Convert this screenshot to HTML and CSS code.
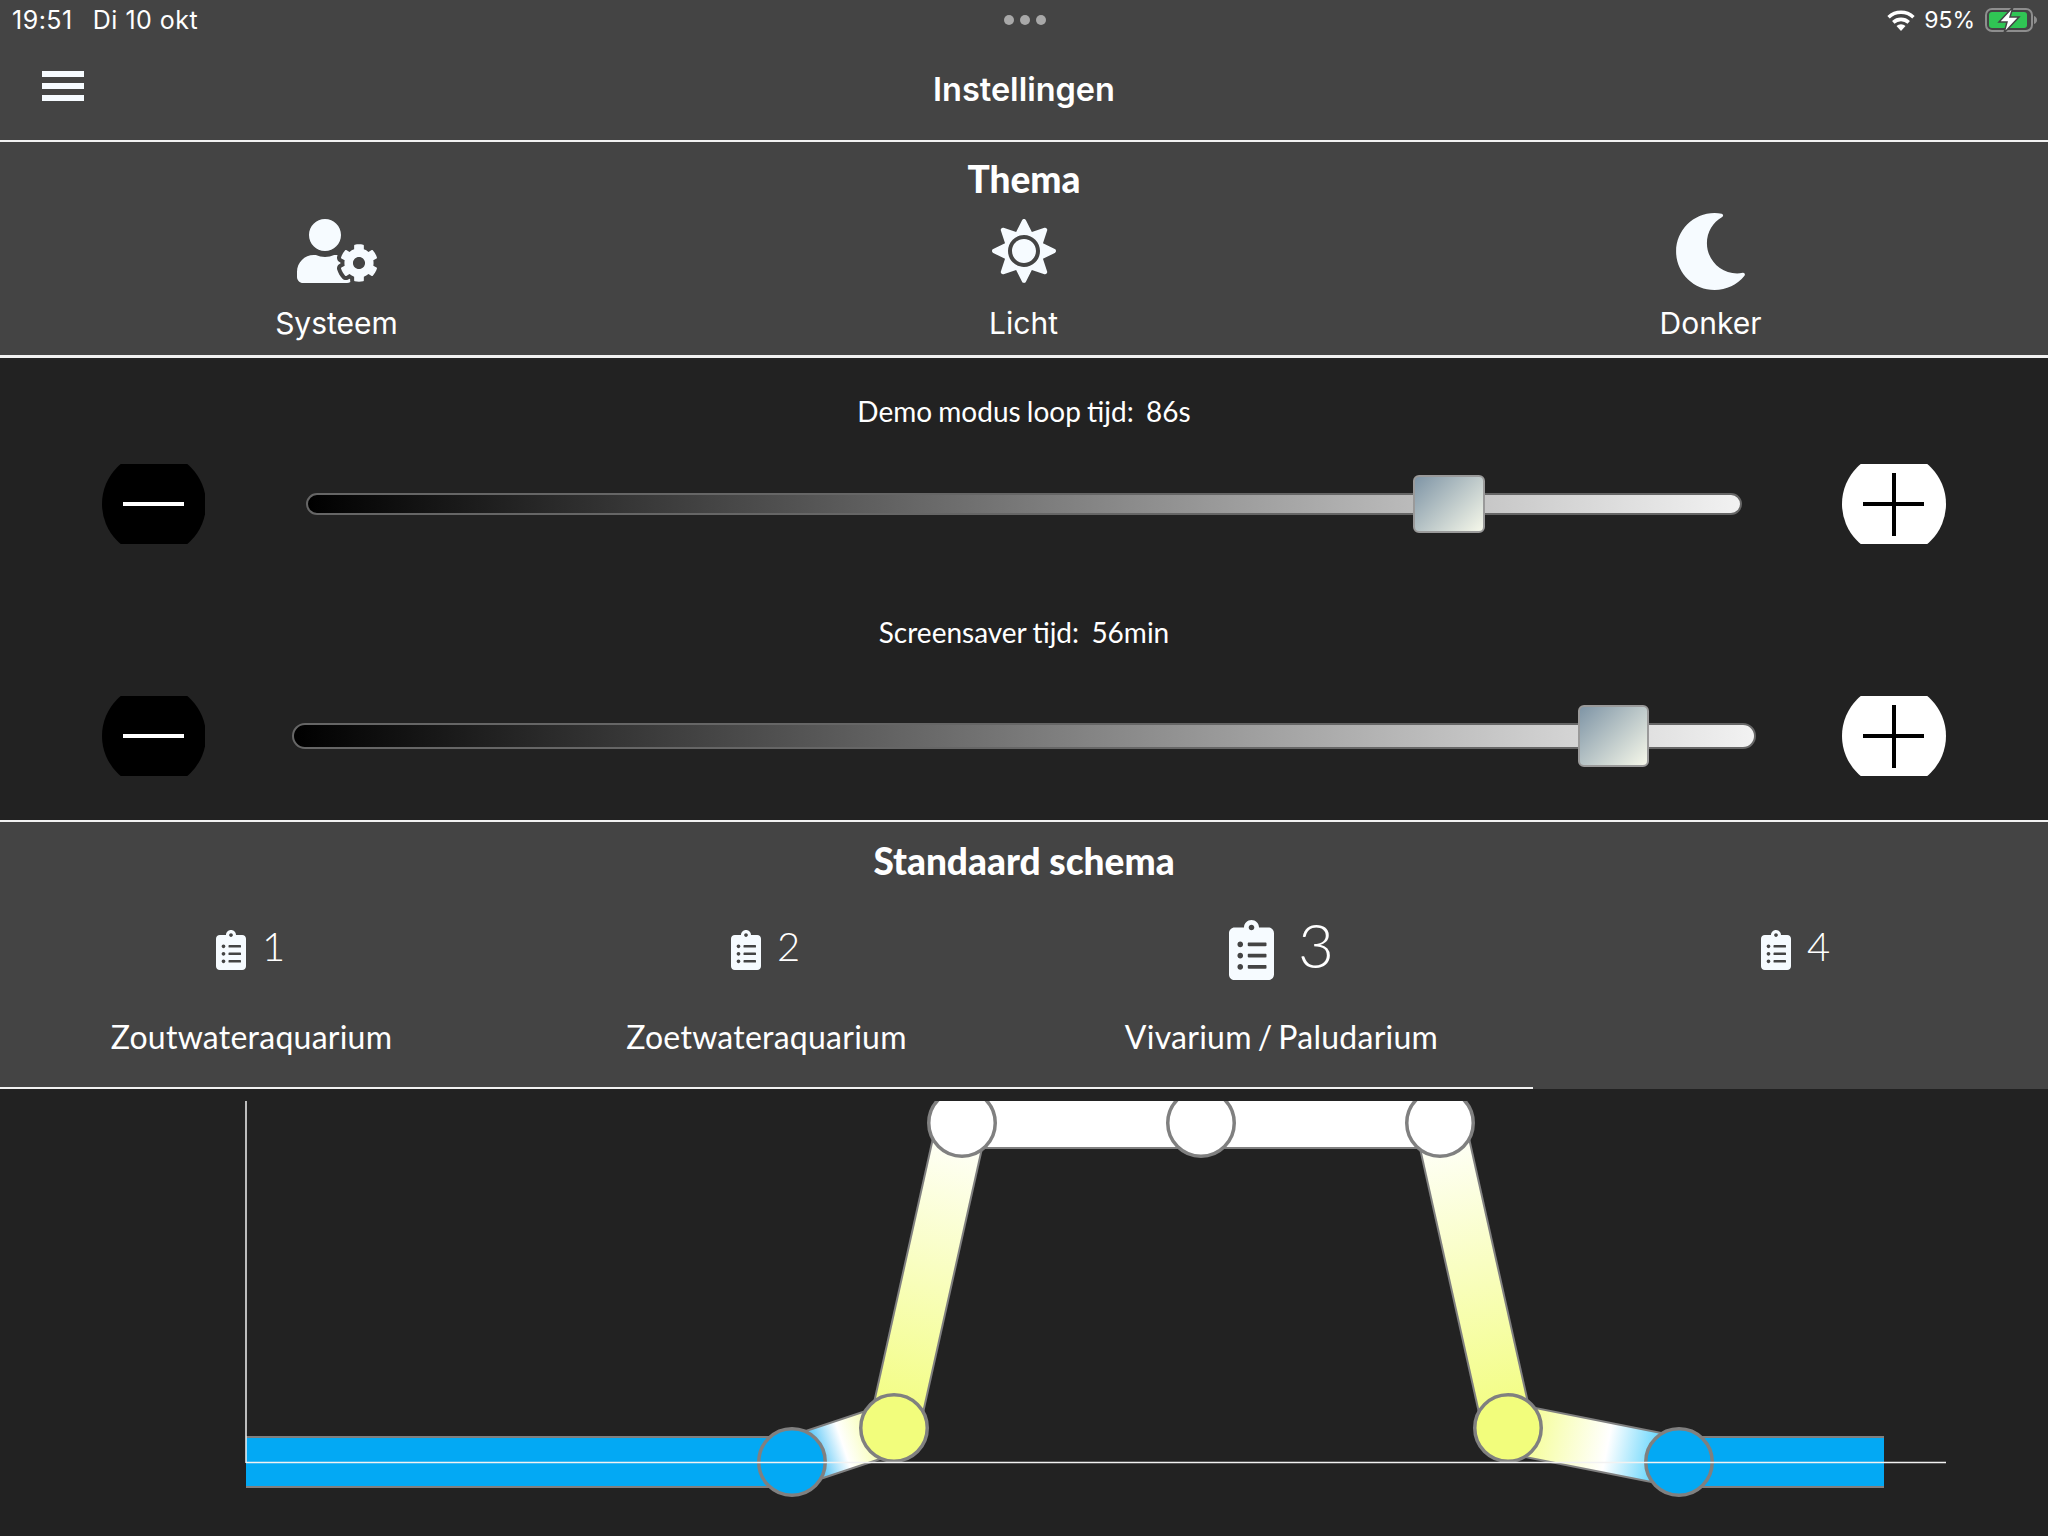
FILE: index.html
```html
<!DOCTYPE html>
<html lang="nl">
<head>
    <meta charset="UTF-8">
    <title>Instellingen</title>
    <link rel="stylesheet" href="styles.css">
</head>
<body>
<div class="top">
    <div class="status">
        <div class="status-left">
            <span>19:51</span>
            <span>Di 10 okt</span>
        </div>
        <div class="dots"><i></i><i></i><i></i></div>
        <div class="status-right">
            <svg class="wifi" viewBox="0 0 28 20">
                <path d="M14 20l-4.300-4.800a6.300 6.300 0 0 1 8.600 0z"/>
                <path d="M7.800 13a9.200 9.200 0 0 1 12.400 0l2.300-2.500a12.600 12.600 0 0 0-17 0z"/>
                <path d="M3.300 8.100a15.800 15.800 0 0 1 21.400 0l2.300-2.500a19.200 19.200 0 0 0-26 0z"/>
            </svg>
            <span>95%</span>
            <svg class="battery" viewBox="0 0 52 26">
                <rect x="1" y="2" width="46" height="22" rx="6" fill="none" stroke="#8e8e8e" stroke-width="2"/>
                <rect x="4" y="5" width="38" height="16" rx="3" fill="#30c554"/>
                <path d="M49 9c1.700.4 3 2 3 4s-1.300 3.600-3 4z" fill="#8e8e8e"/>
                <path d="M28 0L14 15h8l-3 11 15-16h-9z" fill="#fff" stroke="#444" stroke-width="1.500"/>
            </svg>
        </div>
    </div>
    <div class="titlebar">
        <div class="burger"><i></i><i></i><i></i></div>
        <h1>Instellingen</h1>
    </div>
</div>

<section class="theme">
    <h2>Thema</h2>
    <div class="theme-row">
        <div class="theme-item">
            <div class="theme-icon">
                <svg class="icon-user" viewBox="0 0 640 512"><path d="M610.500 373.300c2.600-14.100 2.600-28.500 0-42.600l25.800-14.900c3-1.700 4.300-5.200 3.300-8.500-6.700-21.600-18.200-41.200-33.200-57.400-2.300-2.500-6-3.100-9-1.400l-25.800 14.900c-10.900-9.300-23.400-16.500-36.900-21.300v-29.800c0-3.400-2.400-6.400-5.700-7.100-22.300-5-45-4.800-66.200 0-3.300.7-5.700 3.700-5.700 7.100v29.800c-13.500 4.800-26 12-36.900 21.300l-25.800-14.900c-2.900-1.700-6.700-1.100-9 1.400-15 16.200-26.500 35.800-33.200 57.400-1 3.300.4 6.800 3.300 8.500l25.800 14.900c-2.600 14.100-2.600 28.500 0 42.600l-25.800 14.900c-3 1.700-4.300 5.200-3.300 8.500 6.700 21.600 18.200 41.100 33.200 57.400 2.300 2.500 6 3.100 9 1.400l25.800-14.900c10.900 9.300 23.400 16.500 36.900 21.300v29.800c0 3.400 2.400 6.400 5.700 7.100 22.300 5 45 4.800 66.200 0 3.300-.7 5.700-3.700 5.700-7.100v-29.800c13.500-4.800 26-12 36.900-21.300l25.800 14.900c2.900 1.700 6.700 1.100 9-1.400 15-16.200 26.500-35.800 33.200-57.400 1-3.300-.4-6.800-3.300-8.500l-25.800-14.900zM496 400.500c-26.800 0-48.500-21.800-48.500-48.500s21.800-48.500 48.500-48.500 48.500 21.800 48.500 48.500-21.700 48.500-48.500 48.500zM224 256c70.700 0 128-57.300 128-128S294.700 0 224 0 96 57.300 96 128s57.300 128 128 128zm201.200 226.500c-2.300-1.200-4.600-2.600-6.800-3.900l-7.900 4.600c-6 3.400-12.800 5.300-19.600 5.300-10.900 0-21.400-4.600-28.900-12.600-18.300-19.800-32.300-43.900-40.200-69.600-5.500-17.700 1.900-36.400 17.900-45.700l7.900-4.600c-.1-2.600-.1-5.200 0-7.800l-7.900-4.600c-16-9.200-23.400-28-17.900-45.700.9-2.900 2.200-5.800 3.200-8.700-3.800-.3-7.500-1.200-11.400-1.200h-16.700c-22.200 10.200-46.900 16-72.900 16s-50.600-5.800-72.900-16h-16.700C60.200 288 0 348.200 0 422.400V464c0 26.500 21.500 48 48 48h352c10.100 0 19.500-3.200 27.200-8.500-1.200-3.800-2-7.700-2-11.800v-9.200z"/></svg>
            </div>
            <span>Systeem</span>
        </div>
        <div class="theme-item">
            <div class="theme-icon">
                <svg class="icon-sun" viewBox="0 0 512 512"><path d="M256 160c-52.900 0-96 43.100-96 96s43.100 96 96 96 96-43.100 96-96-43.100-96-96-96zm246.400 80.500l-94.700-47.300 33.500-100.400c4.500-13.600-8.400-26.500-21.900-21.900l-100.400 33.500-47.400-94.800c-6.400-12.800-24.600-12.800-31 0l-47.300 94.700L92.700 70.800c-13.600-4.500-26.500 8.400-21.900 21.900l33.500 100.400-94.700 47.400c-12.800 6.400-12.800 24.600 0 31l94.700 47.300-33.500 100.500c-4.500 13.600 8.400 26.500 21.900 21.900l100.400-33.500 47.300 94.700c6.400 12.800 24.600 12.800 31 0l47.300-94.700 100.400 33.500c13.600 4.500 26.500-8.400 21.900-21.900l-33.500-100.400 94.700-47.300c13-6.500 13-24.700.2-31.100zm-155.900 106c-49.900 49.900-131.100 49.900-181 0-49.900-49.900-49.900-131.100 0-181 49.900-49.900 131.100-49.900 181 0 49.900 49.900 49.900 131.100 0 181z"/></svg>
            </div>
            <span>Licht</span>
        </div>
        <div class="theme-item">
            <div class="theme-icon">
                <svg class="icon-moon" viewBox="0 0 512 512"><path d="M283.211 512c78.962 0 151.079-35.925 198.857-94.792 7.068-8.708-.639-21.430-11.562-19.350-124.203 23.654-238.262-71.576-238.262-196.954 0-72.222 38.662-138.635 101.498-174.394 9.686-5.512 7.250-20.197-3.756-22.230A258.156 258.156 0 0 0 283.211 0c-141.309 0-256 114.511-256 256 0 141.309 114.511 256 256 256z"/></svg>
            </div>
            <span>Donker</span>
        </div>
    </div>
</section>

<section class="sliders">
    <p class="slider-label">Demo modus loop tijd:&nbsp; 86s</p>
    <div class="slider-row">
        <div class="round-btn minus"><b></b></div>
        <div class="track track-demo"><div class="thumb"></div></div>
        <div class="round-btn plus"><b></b><u></u></div>
    </div>
    <p class="slider-label slider-label-next">Screensaver tijd:&nbsp; 56min</p>
    <div class="slider-row slider-row-next">
        <div class="round-btn minus"><b></b></div>
        <div class="track track-saver"><div class="thumb"></div></div>
        <div class="round-btn plus"><b></b><u></u></div>
    </div>
</section>

<section class="schema">
    <h2>Standaard schema</h2>
    <div class="schema-row">
        <div class="schema-item">
            <div class="schema-num"><svg viewBox="0 0 384 512"><use href="#clip"/></svg><span>1</span></div>
            <p>Zoutwateraquarium</p>
        </div>
        <div class="schema-item">
            <div class="schema-num"><svg viewBox="0 0 384 512"><use href="#clip"/></svg><span>2</span></div>
            <p>Zoetwateraquarium</p>
        </div>
        <div class="schema-item active">
            <div class="schema-num"><svg viewBox="0 0 384 512"><use href="#clip"/></svg><span>3</span></div>
            <p>Vivarium / Paludarium</p>
        </div>
        <div class="schema-item">
            <div class="schema-num"><svg viewBox="0 0 384 512"><use href="#clip"/></svg><span>4</span></div>
            <p></p>
        </div>
    </div>
    <div class="schema-line"></div>
</section>

<div class="chart-wrap">
    <svg class="chart" width="1800" height="400" viewBox="200 1101 1800 400">
        <defs>
            <path id="clip" d="M336 64h-80c0-35.300-28.700-64-64-64s-64 28.700-64 64H48C21.500 64 0 85.500 0 112v352c0 26.500 21.500 48 48 48h288c26.500 0 48-21.500 48-48V112c0-26.500-21.500-48-48-48zM96 424c-13.300 0-24-10.700-24-24s10.700-24 24-24 24 10.700 24 24-10.700 24-24 24zm0-96c-13.300 0-24-10.700-24-24s10.700-24 24-24 24 10.700 24 24-10.700 24-24 24zm0-96c-13.300 0-24-10.700-24-24s10.700-24 24-24 24 10.700 24 24-10.700 24-24 24zm96-192c13.300 0 24 10.700 24 24s-10.700 24-24 24-24-10.700-24-24 10.700-24 24-24zm128 368c0 4.400-3.600 8-8 8H168c-4.400 0-8-3.600-8-8v-16c0-4.400 3.600-8 8-8h144c4.400 0 8 3.600 8 8v16zm0-96c0 4.400-3.600 8-8 8H168c-4.400 0-8-3.600-8-8v-16c0-4.400 3.600-8 8-8h144c4.400 0 8 3.600 8 8v16zm0-96c0 4.400-3.600 8-8 8H168c-4.400 0-8-3.600-8-8v-16c0-4.400 3.600-8 8-8h144c4.400 0 8 3.600 8 8v16z"/>
            <linearGradient id="g1" gradientUnits="userSpaceOnUse" x1="792" y1="1462" x2="894" y2="1428">
                <stop offset="0.1" stop-color="#03a9f4"/><stop offset="0.5" stop-color="#fff"/><stop offset="1" stop-color="#f2fd7c"/>
            </linearGradient>
            <linearGradient id="g2" gradientUnits="userSpaceOnUse" x1="894" y1="1428" x2="962" y2="1123">
                <stop offset="0" stop-color="#f2fd7c"/><stop offset="1" stop-color="#fff"/>
            </linearGradient>
            <linearGradient id="g3" gradientUnits="userSpaceOnUse" x1="1440" y1="1123" x2="1508" y2="1428">
                <stop offset="0" stop-color="#fff"/><stop offset="1" stop-color="#f2fd7c"/>
            </linearGradient>
            <linearGradient id="g4" gradientUnits="userSpaceOnUse" x1="1508" y1="1428" x2="1679" y2="1462">
                <stop offset="0" stop-color="#f2fd7c"/><stop offset="0.58" stop-color="#fff"/><stop offset="0.85" stop-color="#70d8fc"/><stop offset="1" stop-color="#03a9f4"/>
            </linearGradient>
        </defs>
        <g class="edge">
            <line x1="246" y1="1462" x2="792" y2="1462"/>
            <line x1="792" y1="1462" x2="894" y2="1428"/>
            <line x1="894" y1="1428" x2="962" y2="1123"/>
            <line x1="962" y1="1123" x2="1440" y2="1123"/>
            <line x1="1440" y1="1123" x2="1508" y2="1428"/>
            <line x1="1508" y1="1428" x2="1679" y2="1462"/>
            <line x1="1679" y1="1462" x2="1884" y2="1462"/>
        </g>
        <g class="fill">
            <line x1="246" y1="1462" x2="792" y2="1462" stroke="#03a9f4"/>
            <line x1="792" y1="1462" x2="894" y2="1428" stroke="url(#g1)"/>
            <line x1="894" y1="1428" x2="962" y2="1123" stroke="url(#g2)"/>
            <line x1="962" y1="1123" x2="1440" y2="1123" stroke="#fff"/>
            <line x1="1440" y1="1123" x2="1508" y2="1428" stroke="url(#g3)"/>
            <line x1="1508" y1="1428" x2="1679" y2="1462" stroke="url(#g4)"/>
            <line x1="1679" y1="1462" x2="1884" y2="1462" stroke="#03a9f4"/>
        </g>
        <g class="point">
            <circle cx="792" cy="1462" r="33.250" fill="#03a9f4"/>
            <circle cx="894" cy="1428" r="33.250" fill="#f2fd7c"/>
            <circle cx="962" cy="1123" r="33.250" fill="#fff"/>
            <circle cx="1201" cy="1123" r="33.250" fill="#fff"/>
            <circle cx="1440" cy="1123" r="33.250" fill="#fff"/>
            <circle cx="1508" cy="1428" r="33.250" fill="#f2fd7c"/>
            <circle cx="1679" cy="1462" r="33.250" fill="#03a9f4"/>
        </g>
        <g class="axis">
            <line x1="246" y1="1101" x2="246" y2="1463"/>
            <line x1="246" y1="1462.500" x2="1946" y2="1462.500"/>
        </g>
    </svg>
</div>
</body>
</html>
```

FILE: styles.css
```css
* {
    box-sizing: border-box;
    margin: 0;
    padding: 0;
}

body {
    width: 2048px;
    height: 1536px;
    overflow: hidden;
    background: #222;
    color: #fff;
    font-family: Inter, sans-serif;
}

svg {
    display: block;
    fill: #f6fbff;
}

/* top bar */
.top {
    height: 142px;
    background: #444;
    border-bottom: 2px solid #f2f2f2;
}

.status {
    height: 36px;
    padding: 4px 11px 0 12px;
    display: grid;
    grid-template-columns: 1fr auto 1fr;
    align-items: center;
    font-size: 23px;
}

.status-left {
    display: flex;
    gap: 20px;
    font-size: 25px;
    letter-spacing: 0.5px;
}

.dots {
    display: flex;
    gap: 6px;
}

.dots i {
    width: 10px;
    height: 10px;
    border-radius: 50%;
    background: #a8a8a8;
}

.status-right {
    display: flex;
    justify-content: flex-end;
    align-items: center;
    gap: 8px;
}

.wifi {
    width: 30px;
    height: 21px;
    fill: #fff;
}

.battery {
    width: 52px;
    height: 26px;
    margin-left: 2px;
}

.titlebar {
    position: relative;
    height: 104px;
    padding-top: 35px;
}

.titlebar h1 {
    text-align: center;
    font-size: 32.500px;
    font-weight: 600;
    line-height: 38px;
}

.burger {
    position: absolute;
    left: 42px;
    top: 35px;
    width: 42px;
}

.burger i {
    display: block;
    height: 6px;
    margin-bottom: 6px;
    background: #f6fbff;
}

/* theme */
.theme {
    height: 216px;
    background: #444;
    border-bottom: 3px solid #f2f2f2;
    padding-top: 15px;
}

h2 {
    text-align: center;
    font-family: Lato, sans-serif;
    font-weight: 900;
    font-size: 37px;
    line-height: 44px;
}

.theme-row {
    display: grid;
    grid-template-columns: repeat(3, 687px);
    margin-left: -7px;
    margin-top: 5px;
}

.theme-item {
    display: flex;
    flex-direction: column;
    align-items: center;
    font-size: 30px;
}

.theme-icon {
    height: 90px;
    margin-bottom: 9px;
    display: flex;
    align-items: center;
    justify-content: center;
}

.icon-user {
    width: 80px;
    height: 64px;
}

.icon-sun {
    width: 64px;
    height: 64px;
}

.icon-moon {
    width: 77px;
    height: 77px;
}

/* sliders */
.sliders {
    height: 464px;
    padding-top: 33px;
    border-bottom: 2px solid #f2f2f2;
}

.slider-label {
    height: 40px;
    line-height: 40px;
    text-align: center;
    font-family: Lato, sans-serif;
    font-size: 28px;
    word-spacing: -1px;
}

.slider-label-next {
    margin-top: 68px;
}

.slider-row {
    display: flex;
    align-items: center;
    height: 80px;
    margin-top: 33px;
    padding: 0 102px;
    justify-content: space-between;
}

.slider-row-next {
    margin-top: 44px;
}

.round-btn {
    position: relative;
    width: 104px;
    height: 80px;
    overflow: hidden;
}

.round-btn::before {
    content: "";
    position: absolute;
    left: 0;
    top: -12px;
    width: 104px;
    height: 104px;
    border-radius: 50%;
}

.minus {
    width: 103px;
}

.minus::before {
    background: #000;
}

.plus::before {
    background: #fff;
}

.round-btn b {
    position: absolute;
    left: 21px;
    top: 38px;
    width: 61px;
    height: 4px;
    background: #fff;
}

.plus b,
.plus u {
    background: #000;
}

.plus u {
    position: absolute;
    left: 50px;
    top: 9px;
    width: 4px;
    height: 63px;
}

.track {
    position: relative;
    height: 22px;
    border: 2px solid #666;
    border-radius: 13px;
    background: linear-gradient(to right, #000, #f2f2f2);
}

.track-demo {
    width: 1436px;
}

.track-saver {
    width: 1464px;
    height: 26px;
}

.thumb {
    position: absolute;
    top: 50%;
    width: 72px;
    height: 58px;
    transform: translateY(-50%);
    border: 2px solid #9a9a9a;
    border-radius: 6px;
    background: linear-gradient(135deg, #7f95a6, #f6f8ea);
}

.track-demo .thumb {
    left: 1105px;
}

.track-saver .thumb {
    left: 1284px;
    width: 71px;
    height: 62px;
}

/* schema */
.schema {
    height: 267px;
    background: #444;
    padding-top: 17px;
    position: relative;
}

.schema-row {
    display: grid;
    grid-template-columns: repeat(4, 515px);
    margin-left: -6px;
}

.schema-item {
    display: flex;
    flex-direction: column;
    align-items: center;
}

.schema-num {
    height: 133px;
    padding-right: 2px;
    display: flex;
    align-items: center;
    justify-content: center;
    gap: 16px;
    font-family: Lato, sans-serif;
    font-weight: 300;
    font-size: 40px;
}

.schema-num span {
    padding-bottom: 8px;
}

.schema-num svg {
    width: 30px;
    height: 40px;
}

.schema-item.active .schema-num {
    padding-right: 0;
    gap: 24px;
    font-size: 62px;
}

.schema-item.active .schema-num span {
    padding-bottom: 12px;
}

.schema-item.active .schema-num svg {
    width: 45px;
    height: 60px;
}

.schema-item p {
    margin-top: 1px;
    font-family: Lato, sans-serif;
    font-size: 32px;
    line-height: 40px;
    letter-spacing: 0.25px;
    word-spacing: -2.500px;
}

.schema-line {
    position: absolute;
    left: 0;
    bottom: 0;
    width: 1533px;
    height: 2px;
    background: #f2f2f2;
}

/* chart */
.chart-wrap {
    padding: 12px 0 0 200px;
}

.chart {
    overflow: hidden;
}

.edge line {
    stroke: #808080;
    stroke-width: 52;
}

.fill line {
    stroke-width: 48;
}

.axis line {
    stroke: #f2f2f2;
    stroke-width: 1.500;
}

.point circle {
    stroke: #808080;
    stroke-width: 3.500;
}
```
